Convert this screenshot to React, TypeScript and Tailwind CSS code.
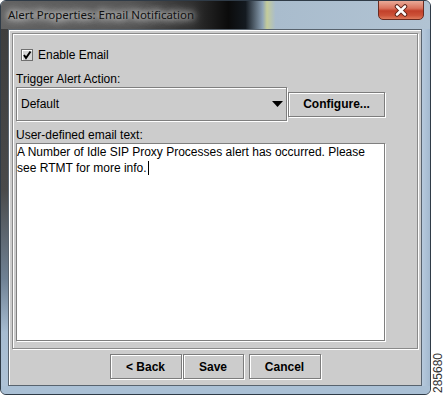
export default function App() {
    return (
        <div className="flex w-[445px] h-[396px] bg-white font-['Liberation_Sans',Arial,sans-serif] text-[12px] text-black">
            <Window />
            <div className="flex flex-1 items-end justify-center pb-[3px]">
                <span className="[writing-mode:vertical-rl] rotate-180 text-[12px] leading-none text-[#333]">285680</span>
            </div>
        </div>
    );
}

function Window() {
    return (
        <div className="flex flex-col w-[431px] h-[395px] rounded-[6px] border border-[#2f3b47] overflow-hidden bg-[#aec2d6]">
            <TitleBar />
            <div className="flex h-[357px]">
                <div className="w-[7px] bg-[linear-gradient(to_bottom,#3e3e3e_0%,#4a4a4a_45%,#6f8194_70%,#a6bcd1_85%,#aec2d6_100%)]" />
                <Panel />
                <div className="flex-1 bg-[linear-gradient(to_right,#b6c9dc,#a3b9cf)]" />
            </div>
            <div className="flex-1 bg-[#aac0d5]" />
        </div>
    );
}

function TitleBar() {
    return (
        <div className="relative h-[28px] flex items-center pl-[7px] bg-[linear-gradient(to_right,#626262_0%,#555_30%,#2e2e2e_45%,#0b0b0b_53%,#141a20_57%,#8ea3b6_61%,#c4cc9a_62%,#a9bccd_64%,#b1c3d3_100%)]">
            <span className="font-['Noto_Sans',sans-serif] text-[11.5px] text-[#111] [text-shadow:0_0_6px_#fff,0_0_10px_#ddd,0_0_14px_#ccc]">
                Alert Properties: Email Notification
            </span>
            <div className="absolute top-[-1px] right-[6px] w-[46px] h-[20px] rounded-b-[5px] border border-[#6a2b20] bg-[linear-gradient(to_bottom,#e9aa98_0%,#d9735d_40%,#c2402a_55%,#cc5238_80%,#de7a5c_100%)] flex items-center justify-center">
                <svg width="16" height="13" viewBox="0 0 16 13">
                    <path d="M4 2.5 L12 10.5 M12 2.5 L4 10.5" stroke="#5a2218" strokeWidth="4.5" strokeLinecap="round" />
                    <path d="M4 2.5 L12 10.5 M12 2.5 L4 10.5" stroke="#fff" strokeWidth="2.5" strokeLinecap="round" />
                </svg>
            </div>
        </div>
    );
}

function Btn({ label, w, className = '' }: { label: string; w: string; className?: string }) {
    return (
        <div
            className={`flex items-center justify-center h-[25px] ${w} ${className} border border-[#7c7c7c] bg-[#cccccc] shadow-[inset_1px_1px_0_#fff,1px_1px_0_#fff] font-bold text-[12px]`}
        >
            {label}
        </div>
    );
}

function Panel() {
    return (
        <div className="flex flex-col w-[414px] h-[357px] bg-[#cccccc] border border-[#58636e] shadow-[inset_1px_1px_0_#fff]">
            <div className="ml-[3px] mt-[3px] w-[406px] h-[316px] border border-[#8a8a8a] shadow-[inset_1px_1px_0_#fff,1px_1px_0_#fff] pl-[3px]">
                <div className="flex items-center h-[12px] mt-[15px] ml-[5px]">
                    <div className="w-[12px] h-[12px] border border-[#6f6f6f] bg-[#d6d6d6] shadow-[inset_1px_1px_0_#fff] flex items-center justify-center">
                        <svg width="10" height="10" viewBox="0 0 10 10">
                            <path d="M2 5 L4 8 L8.5 1.5" fill="none" stroke="#000" strokeWidth="2" />
                        </svg>
                    </div>
                    <span className="ml-[5px] leading-[12px]">Enable Email</span>
                </div>
                <div className="mt-[11px] h-[14px] leading-[14px]">Trigger Alert Action:</div>
                <div className="flex items-center mt-[1px]">
                    <div className="flex items-center justify-between w-[271px] h-[34px] border border-[#7f7f7f] shadow-[inset_1px_1px_0_#fff,1px_1px_0_#fff] pl-[4px] pr-[3px]">
                        <span>Default</span>
                        <svg width="11" height="6" viewBox="0 0 11 6">
                            <path d="M0 0 H11 L5.5 6 Z" fill="#000" />
                        </svg>
                    </div>
                    <Btn label="Configure..." w="w-[97px]" className="ml-[1px] h-[24px]" />
                </div>
                <div className="mt-[7px] h-[14px] leading-[14px]">User-defined email text:</div>
                <div className="mt-[1px] w-[369px] h-[198px] bg-white border border-[#7f7f7f] shadow-[1px_1px_0_#fff] leading-[16px] whitespace-nowrap">
                    <div>A Number of Idle SIP Proxy Processes alert has occurred. Please</div>
                    <div className="flex items-center">
                        see RTMT for more info.
                        <span className="inline-block w-[1px] h-[14px] bg-black ml-[1px]" />
                    </div>
                </div>
            </div>
            <div className="flex justify-center mt-[5px]">
                <Btn label="< Back" w="w-[72px]" />
                <Btn label="Save" w="w-[61px]" className="ml-[1px]" />
                <Btn label="Cancel" w="w-[72px]" className="ml-[5px]" />
            </div>
        </div>
    );
}
